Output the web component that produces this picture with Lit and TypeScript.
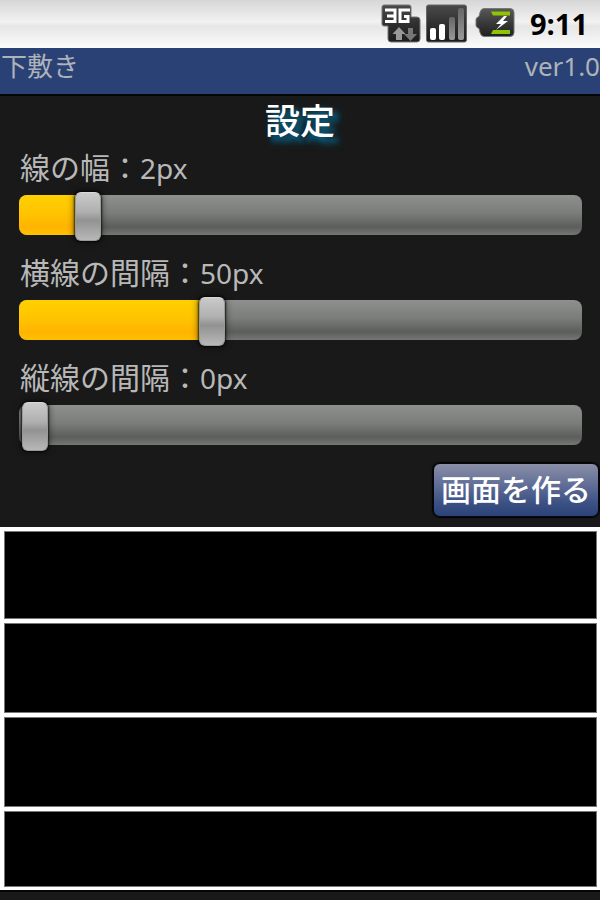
import { LitElement, html, css } from "lit";
import { customElement, property, state } from "lit/decorators.js";
import { styleMap } from "lit/directives/style-map.js";

@customElement("setting-slider")
class SettingSlider extends LitElement {
  @property() label = "";
  @property({ type: Number }) max = 100;
  @property({ type: Number }) value = 0;

  static styles = css`
    :host { display: block; }
    .label {
      display: block;
      height: 44px;
      line-height: 40px;
      font-size: 30px;
      color: #b8b8b8;
      padding-left: 1px;
    }
    .value { font-size: 28px; }
    .slider { display: grid; height: 49px; }
    .track {
      grid-area: 1 / 1;
      margin: 3px 0 6px;
      padding: 0 16px;
      border-radius: 8px;
      overflow: hidden;
      background: linear-gradient(#8e908e, #7a7d7a 45%, #5b5e5b 80%, #747774);
    }
    .fill {
      height: 100%;
      margin-left: -16px;
      padding-left: 16px;
      background: linear-gradient(#ffd000, #ffc400 45%, #ffb400 80%, #ffc000);
    }
    .fill.empty { visibility: hidden; }
    input {
      grid-area: 1 / 1;
      appearance: none;
      -webkit-appearance: none;
      height: 49px;
      min-width: 0;
      width: auto;
      margin: 0 3px;
      background: none;
      outline-offset: 2px;
    }
    input::-webkit-slider-thumb {
      -webkit-appearance: none;
      box-sizing: border-box;
      width: 26px;
      height: 49px;
      border: 1px solid #999;
      border-top-color: #d8d8d8;
      border-radius: 6px;
      background: linear-gradient(#cacaca, #b0b0b0 40%, #929292 58%, #b8b8b8);
      box-shadow: 0 0 2px 1px rgba(0, 0, 0, 0.7), 0 0 6px 2px rgba(0, 0, 0, 0.35);
    }
  `;

  private onInput(e: Event) {
    this.value = Number((e.target as HTMLInputElement).value);
    this.dispatchEvent(new CustomEvent("value-change", { detail: this.value }));
  }

  render() {
    const width = `${(this.value / this.max) * 100}%`;
    return html`
      <label class="label" for="range">${this.label}：<span class="value">${this.value}px</span></label>
      <div class="slider">
        <div class="track">
          <div class="fill ${this.value === 0 ? "empty" : ""}" style=${styleMap({ width })}></div>
        </div>
        <input id="range" type="range" min="0" max=${this.max} .value=${String(this.value)} @input=${this.onInput} />
      </div>
    `;
  }
}

@customElement("status-bar")
class StatusBar extends LitElement {
  static styles = css`
    :host {
      display: flex;
      justify-content: flex-end;
      align-items: center;
      height: 48px;
      padding-right: 12px;
      box-sizing: border-box;
      background: linear-gradient(#d6d6d6, #f2f2f2 45%, #e6e6e6 55%, #fbfbfb);
    }
    svg { display: block; }
    .clock {
      margin-left: 14px;
      font: 700 29px/48px "Open Sans", "Noto Sans", sans-serif;
      color: #000;
    }
  `;

  render() {
    return html`
      <svg width="136" height="42" viewBox="380 3 136 42" aria-hidden="true">
        <defs>
          <linearGradient id="dark" x2="0" y2="1">
            <stop offset="0" stop-color="#4a4a4a" />
            <stop offset=".5" stop-color="#303030" />
            <stop offset="1" stop-color="#1c1c1c" />
          </linearGradient>
          <linearGradient id="bar" x2="0" y2="1">
            <stop offset="0" stop-color="#666" />
            <stop offset="1" stop-color="#999" />
          </linearGradient>
          <linearGradient id="cell" x2="0" y2="1">
            <stop offset="0" stop-color="#585858" />
            <stop offset=".5" stop-color="#3a3a3a" />
            <stop offset="1" stop-color="#202020" />
          </linearGradient>
        </defs>
        <path d="M384 5h25q2 0 2 2v10h6q3 0 3 3v19q0 3-3 3h-26q-3 0-3-3V26h-4q-2 0-2-2V7q0-2 2-2z" fill="url(#dark)" stroke="#777" />
        <path d="M385 10h10v11.500h-10M387 16h8" fill="none" stroke="#fff" stroke-width="3" />
        <path d="M410 10h-10v11.500h8v-5h-4" fill="none" stroke="#fff" stroke-width="3" />
        <path d="M399 27l6.500 7h-3.500v6h-6v-6h-3.500z" fill="#999" />
        <path d="M408 28h5v6h4l-6.500 7-6.500-7h4z" fill="#777" />
        <rect x="426.500" y="5" width="40" height="37" rx="2" fill="url(#dark)" stroke="#666" />
        <rect x="430" y="28" width="6" height="12" rx="2" fill="#fff" />
        <rect x="439" y="24" width="6" height="16" rx="2" fill="#fff" />
        <rect x="449" y="17" width="6" height="23" rx="2" fill="url(#bar)" />
        <rect x="458" y="8" width="6" height="32" rx="2" fill="url(#bar)" />
        <path d="M484 8.500h26q4 0 4 4v20q0 4-4 4h-26q-3 0-4-4l-1-4q-3-1-3-3v-6q0-2 3-3l1-4q1-4 4-4z" fill="url(#cell)" stroke="#777" />
        <path d="M491 11.500h19v4h-17zM491 34h19v-4h-17z" fill="#8fc400" />
        <path d="M504 16l-8 8h5l-5 6 12-9h-5l4-5z" fill="#fff" />
      </svg>
      <time class="clock">9:11</time>
    `;
  }
}

@customElement("app-root")
class AppRoot extends LitElement {
  @state() private rows = [88, 90, 90, 76];

  static styles = css`
    :host {
      display: block;
      min-height: 100vh;
      background: #191919;
      font-family: "Noto Sans", "Noto Sans CJK JP", sans-serif;
    }
    .titlebar {
      display: flex;
      justify-content: space-between;
      height: 46px;
      padding-left: 1px;
      border-bottom: 2px solid #050505;
      background: #2a4175;
      color: #aeb3ba;
      font-size: 26px;
      line-height: 36px;
    }
    .settings {
      display: flex;
      flex-direction: column;
      gap: 12px;
      padding-bottom: 10px;
    }
    h1 {
      margin: 0 0 -12px;
      height: 52px;
      line-height: 50px;
      text-align: center;
      font-size: 35px;
      font-weight: 500;
      color: #fff;
      text-shadow: 5px 5px 5px #0a5878, 5px 5px 9px #0a5878;
    }
    setting-slider { margin: 0 18px 0 19px; }
    button {
      align-self: flex-end;
      box-sizing: border-box;
      height: 54px;
      margin-right: 1px;
      padding: 0 7px;
      border: 1px solid #05070c;
      border-radius: 7px;
      background: linear-gradient(#8b8fa6, #66729a 35%, #3c5183 75%, #2b4379);
      color: #fff;
      font: 500 30px/50px "Noto Sans", "Noto Sans CJK JP", sans-serif;
      box-shadow: 0 0 1px 1px #050505;
    }
    .preview {
      display: flex;
      flex-direction: column;
      gap: 4px;
      padding: 4px 3px 3px 4px;
      background: #fff;
      box-shadow: 0 2px 0 #050505;
    }
    .row { background: #000; outline: 1px solid #777; outline-offset: -1px; }
  `;

  render() {
    return html`
      <status-bar></status-bar>
      <header class="titlebar"><span>下敷き</span><span>ver1.0</span></header>
      <main>
        <section class="settings">
          <h1>設定</h1>
          <setting-slider label="線の幅" max="20" value="2"></setting-slider>
          <setting-slider label="横線の間隔" max="150" value="50"></setting-slider>
          <setting-slider label="縦線の間隔" max="150" value="0"></setting-slider>
          <button type="button">画面を作る</button>
        </section>
        <div class="preview">
          ${this.rows.map((h) => html`<div class="row" style=${styleMap({ height: `${h}px` })}></div>`)}
        </div>
      </main>
    `;
  }
}
